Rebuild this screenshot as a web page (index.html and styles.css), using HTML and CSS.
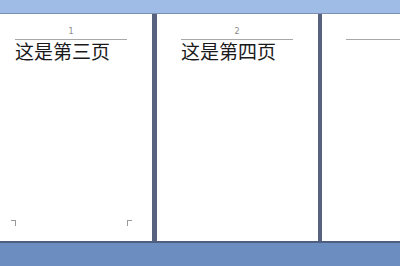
FILE: index.html
```html
<!DOCTYPE html>
<html>
<head>
<meta charset="utf-8">
<link rel="stylesheet" href="styles.css">
</head>
<body>
<div class="screen">
  <div class="top-band"></div>
  <div class="pages">
    <div class="page page-first">
      <div class="header"><span class="num">1</span></div>
      <div class="body-text">这是第三页</div>
      <div class="spacer"></div>
      <div class="marks"><span class="mark mark-l"></span><span class="mark mark-r"></span></div>
    </div>
    <div class="page page-second">
      <div class="header"><span class="num">2</span></div>
      <div class="body-text">这是第四页</div>
    </div>
    <div class="page page-third">
      <div class="header"></div>
    </div>
  </div>
  <div class="bottom-band"></div>
</div>
</body>
</html>
```
FILE: styles.css
```css
html, body {
  margin: 0;
  padding: 0;
}
body {
  width: 400px;
  height: 266px;
  overflow: hidden;
  background: #6b8dc0;
  font-family: "Noto Sans CJK SC", "Noto Sans", sans-serif;
}
.screen {
  width: 400px;
  height: 266px;
  display: flex;
  flex-direction: column;
  overflow: hidden;
}
.top-band {
  height: 13px;
  background: #9fbce6;
  border-bottom: 1px solid #7d8fae;
  flex: none;
}
.pages {
  display: flex;
  height: 227px;
  flex: none;
  background: #56627e;
}
.page {
  width: 161px;
  flex: none;
  background: #ffffff;
  display: flex;
  flex-direction: column;
  padding: 0 25px 0 24px;
  box-sizing: border-box;
}
.page-first {
  margin-left: -9px;
  margin-right: 5px;
}
.page-second {
  margin-right: 4px;
}
.header {
  height: 26px;
  border-bottom: 1px solid #a8a8a8;
  display: flex;
  justify-content: center;
  align-items: flex-end;
  box-sizing: border-box;
  flex: none;
}
.num {
  font-family: "DejaVu Sans", sans-serif;
  font-size: 8px;
  line-height: 10px;
  color: #8a8a8a;
  padding-bottom: 2px;
}
.body-text {
  font-size: 19px;
  line-height: 22px;
  color: #1a1a1a;
  margin-top: 0;
  white-space: nowrap;
}
.spacer {
  flex: 1;
}
.marks {
  display: flex;
  justify-content: space-between;
  margin: 0 -5px 15px -4px;
  height: 6px;
}
.mark {
  width: 4px;
  height: 5px;
  border-top: 1px solid #9a9a9a;
}
.mark-l {
  border-right: 1px solid #9a9a9a;
}
.mark-r {
  border-left: 1px solid #9a9a9a;
}
.bottom-band {
  flex: 1;
  background: #6b8dc0;
  border-top: 2px solid #4d5e80;
}
```
